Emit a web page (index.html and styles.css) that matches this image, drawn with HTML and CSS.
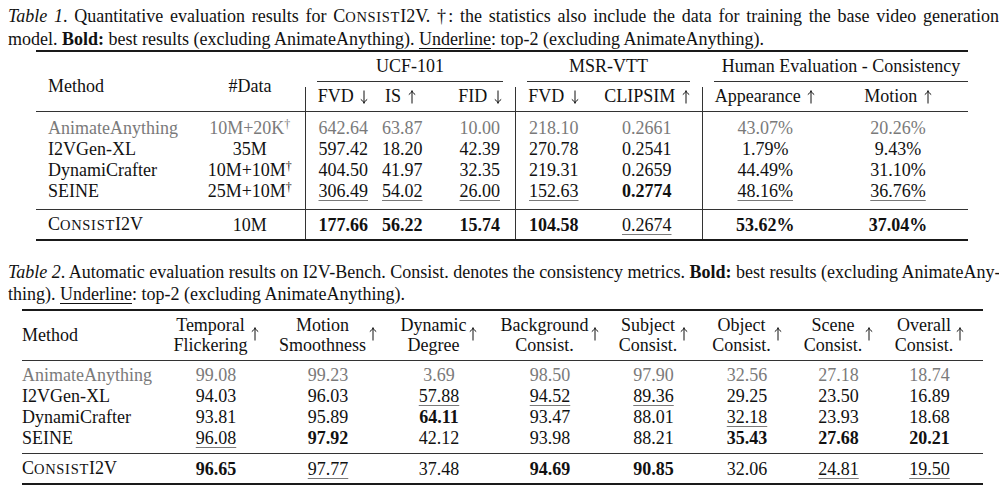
FILE: index.html
```html
<!DOCTYPE html>
<html lang="en">
<head>
<meta charset="utf-8">
<title>Tables</title>
<link rel="stylesheet" href="styles.css">
</head>
<body>
<div class="caption">
  <div class="cap-line full"><i>Table 1</i>. Quantitative evaluation results for <span class="sc">C<span class="sc-s">onsist</span></span>I2V. †: the statistics also include the data for training the base video generation</div>
  <div class="cap-line">model. <b>Bold:</b> best results (excluding AnimateAnything). <span class="ul-plain">Underline</span>: top-2 (excluding AnimateAnything).</div>
</div>

<table class="tbl t1">
  <colgroup>
    <col class="w-method"><col class="w-data"><col class="w-fvd"><col class="w-is"><col class="w-fid"><col class="w-mfvd"><col class="w-clip"><col class="w-app"><col class="w-mot">
  </colgroup>
  <thead>
    <tr>
      <th rowspan="2" class="left multi">Method</th>
      <th rowspan="2" class="multi">#Data</th>
      <th colspan="3" class="grp"><div class="cmid lr">UCF-101</div></th>
      <th colspan="2" class="grp"><div class="cmid lr">MSR-VTT</div></th>
      <th colspan="2" class="grp"><div class="cmid l">Human Evaluation - Consistency</div></th>
    </tr>
    <tr class="sub">
      <th class="vl">FVD <svg class="arw" viewBox="0 0 8 14"><path d="M4 0.5V13M0.8 9.4C2.4 10.4 3.5 11.8 4 13.4C4.5 11.8 5.6 10.4 7.2 9.4"/></svg></th>
      <th class="is">IS <svg class="arw" viewBox="0 0 8 14"><path d="M4 13.5V1M0.8 4.6C2.4 3.6 3.5 2.2 4 0.6C4.5 2.2 5.6 3.6 7.2 4.6"/></svg></th>
      <th class="fid">FID <svg class="arw" viewBox="0 0 8 14"><path d="M4 0.5V13M0.8 9.4C2.4 10.4 3.5 11.8 4 13.4C4.5 11.8 5.6 10.4 7.2 9.4"/></svg></th>
      <th class="vl">FVD <svg class="arw" viewBox="0 0 8 14"><path d="M4 0.5V13M0.8 9.4C2.4 10.4 3.5 11.8 4 13.4C4.5 11.8 5.6 10.4 7.2 9.4"/></svg></th>
      <th>CLIPSIM <svg class="arw" viewBox="0 0 8 14"><path d="M4 13.5V1M0.8 4.6C2.4 3.6 3.5 2.2 4 0.6C4.5 2.2 5.6 3.6 7.2 4.6"/></svg></th>
      <th class="vl">Appearance <svg class="arw" viewBox="0 0 8 14"><path d="M4 13.5V1M0.8 4.6C2.4 3.6 3.5 2.2 4 0.6C4.5 2.2 5.6 3.6 7.2 4.6"/></svg></th>
      <th>Motion <svg class="arw" viewBox="0 0 8 14"><path d="M4 13.5V1M0.8 4.6C2.4 3.6 3.5 2.2 4 0.6C4.5 2.2 5.6 3.6 7.2 4.6"/></svg></th>
    </tr>
  </thead>
  <tbody class="body">
    <tr class="first gray">
      <td class="left">AnimateAnything</td><td>10M+20K<sup class="dag">†</sup></td>
      <td class="vl">642.64</td><td class="is">63.87</td><td class="fid">10.00</td>
      <td class="vl">218.10</td><td>0.2661</td>
      <td class="vl">43.07%</td><td>20.26%</td>
    </tr>
    <tr>
      <td class="left">I2VGen-XL</td><td>35M</td>
      <td class="vl">597.42</td><td class="is">18.20</td><td class="fid">42.39</td>
      <td class="vl">270.78</td><td>0.2541</td>
      <td class="vl">1.79%</td><td>9.43%</td>
    </tr>
    <tr>
      <td class="left">DynamiCrafter</td><td>10M+10M<sup class="dag">†</sup></td>
      <td class="vl">404.50</td><td class="is">41.97</td><td class="fid">32.35</td>
      <td class="vl">219.31</td><td>0.2659</td>
      <td class="vl">44.49%</td><td>31.10%</td>
    </tr>
    <tr class="last">
      <td class="left">SEINE</td><td>25M+10M<sup class="dag">†</sup></td>
      <td class="vl"><span class="ul">306.49</span></td><td class="is"><span class="ul">54.02</span></td><td class="fid"><span class="ul">26.00</span></td>
      <td class="vl"><span class="ul">152.63</span></td><td><b>0.2774</b></td>
      <td class="vl"><span class="ul">48.16%</span></td><td><span class="ul">36.76%</span></td>
    </tr>
  </tbody>
  <tbody class="final">
    <tr>
      <td class="left"><span class="sc">C<span class="sc-s">onsist</span></span>I2V</td><td>10M</td>
      <td class="vl"><b>177.66</b></td><td class="is"><b>56.22</b></td><td class="fid"><b>15.74</b></td>
      <td class="vl"><b>104.58</b></td><td><span class="ul">0.2674</span></td>
      <td class="vl"><b>53.62%</b></td><td><b>37.04%</b></td>
    </tr>
  </tbody>
</table>

<div class="caption cap2">
  <div class="cap-line full"><i>Table 2</i>. Automatic evaluation results on I2V-Bench. Consist. denotes the consistency metrics. <b>Bold:</b> best results (excluding AnimateAny-</div>
  <div class="cap-line">thing). <span class="ul-plain">Underline</span>: top-2 (excluding AnimateAnything).</div>
</div>

<table class="tbl t2">
  <colgroup>
    <col class="v-method"><col class="v-temp"><col class="v-mot"><col class="v-dyn"><col class="v-bg"><col class="v-sub"><col class="v-obj"><col class="v-sce"><col class="v-ovr">
  </colgroup>
  <thead>
    <tr>
      <th class="left">Method</th>
      <th><span class="hd"><span class="hd-t">Temporal<br>Flickering</span><svg class="arw up" viewBox="0 0 8 14"><path d="M4 13.5V1M0.8 4.6C2.4 3.6 3.5 2.2 4 0.6C4.5 2.2 5.6 3.6 7.2 4.6"/></svg></span></th>
      <th><span class="hd"><span class="hd-t">Motion<br>Smoothness</span><svg class="arw up" viewBox="0 0 8 14"><path d="M4 13.5V1M0.8 4.6C2.4 3.6 3.5 2.2 4 0.6C4.5 2.2 5.6 3.6 7.2 4.6"/></svg></span></th>
      <th><span class="hd"><span class="hd-t">Dynamic<br>Degree</span><svg class="arw up" viewBox="0 0 8 14"><path d="M4 13.5V1M0.8 4.6C2.4 3.6 3.5 2.2 4 0.6C4.5 2.2 5.6 3.6 7.2 4.6"/></svg></span></th>
      <th><span class="hd"><span class="hd-t">Background<br>Consist.</span><svg class="arw up" viewBox="0 0 8 14"><path d="M4 13.5V1M0.8 4.6C2.4 3.6 3.5 2.2 4 0.6C4.5 2.2 5.6 3.6 7.2 4.6"/></svg></span></th>
      <th><span class="hd"><span class="hd-t">Subject<br>Consist.</span><svg class="arw up" viewBox="0 0 8 14"><path d="M4 13.5V1M0.8 4.6C2.4 3.6 3.5 2.2 4 0.6C4.5 2.2 5.6 3.6 7.2 4.6"/></svg></span></th>
      <th><span class="hd"><span class="hd-t">Object<br>Consist.</span><svg class="arw up" viewBox="0 0 8 14"><path d="M4 13.5V1M0.8 4.6C2.4 3.6 3.5 2.2 4 0.6C4.5 2.2 5.6 3.6 7.2 4.6"/></svg></span></th>
      <th><span class="hd"><span class="hd-t">Scene<br>Consist.</span><svg class="arw up" viewBox="0 0 8 14"><path d="M4 13.5V1M0.8 4.6C2.4 3.6 3.5 2.2 4 0.6C4.5 2.2 5.6 3.6 7.2 4.6"/></svg></span></th>
      <th class="pr"><span class="hd"><span class="hd-t">Overall<br>Consist.</span><svg class="arw up" viewBox="0 0 8 14"><path d="M4 13.5V1M0.8 4.6C2.4 3.6 3.5 2.2 4 0.6C4.5 2.2 5.6 3.6 7.2 4.6"/></svg></span></th>
    </tr>
  </thead>
  <tbody class="body">
    <tr class="first gray">
      <td class="left">AnimateAnything</td><td>99.08</td><td>99.23</td><td>3.69</td><td>98.50</td><td>97.90</td><td>32.56</td><td>27.18</td><td class="pr">18.74</td>
    </tr>
    <tr>
      <td class="left">I2VGen-XL</td><td>94.03</td><td>96.03</td><td><span class="ul">57.88</span></td><td><span class="ul">94.52</span></td><td><span class="ul">89.36</span></td><td>29.25</td><td>23.50</td><td class="pr">16.89</td>
    </tr>
    <tr>
      <td class="left">DynamiCrafter</td><td>93.81</td><td>95.89</td><td><b>64.11</b></td><td>93.47</td><td>88.01</td><td><span class="ul">32.18</span></td><td>23.93</td><td class="pr">18.68</td>
    </tr>
    <tr class="last">
      <td class="left">SEINE</td><td><span class="ul">96.08</span></td><td><b>97.92</b></td><td>42.12</td><td>93.98</td><td>88.21</td><td><b>35.43</b></td><td><b>27.68</b></td><td class="pr"><b>20.21</b></td>
    </tr>
  </tbody>
  <tbody class="final">
    <tr>
      <td class="left"><span class="sc">C<span class="sc-s">onsist</span></span>I2V</td><td><b>96.65</b></td><td><span class="ul">97.77</span></td><td>37.48</td><td><b>94.69</b></td><td><b>90.85</b></td><td>32.06</td><td><span class="ul">24.81</span></td><td class="pr"><span class="ul">19.50</span></td>
    </tr>
  </tbody>
</table>
</body>
</html>
```

FILE: styles.css
```css
html, body {
  background: #ffffff;
}
body {
  margin: 5px 8px 0 8px;
  font-family: "Liberation Serif", "Times New Roman", serif;
  font-size: 18px;
  color: #111111;
}

.caption {
  line-height: 22px;
}
.cap-line {
  white-space: nowrap;
}
.cap-line.full {
  text-align: justify;
  text-align-last: justify;
}
.cap2 {
  margin-top: 20px;
}
.sc-s {
  text-transform: uppercase;
  font-size: 14.5px;
  letter-spacing: 0.7px;
}
.ul-plain {
  text-decoration: underline;
  text-underline-offset: 3px;
  text-decoration-thickness: 1px;
}
.ul {
  text-decoration: underline;
  text-decoration-color: #7a7a7a;
  text-underline-offset: 3px;
  text-decoration-thickness: 1px;
}

.arw {
  width: 8px;
  height: 14px;
  vertical-align: -2px;
  margin-left: 2px;
  fill: none;
  stroke: currentColor;
  stroke-width: 1;
}

.tbl {
  border-collapse: collapse;
  table-layout: fixed;
  border-top: 2px solid #1a1a1a;
  border-bottom: 2px solid #1a1a1a;
}
.tbl th, .tbl td {
  padding: 0;
  font-weight: normal;
  text-align: center;
  white-space: nowrap;
  line-height: 21px;
}
.tbl .left {
  text-align: left;
}
.tbl b {
  font-weight: bold;
}
.tbl tbody.body {
  border-top: 1px solid #333333;
}
.tbl tbody.body tr.first td {
  padding-top: 6px;
}
.tbl tbody.body tr.last td {
  padding-bottom: 7px;
}
.tbl tbody.final {
  border-top: 1px solid #333333;
}
.tbl tbody.final td {
  padding-top: 4px;
  padding-bottom: 3px;
}
.tbl tr.gray td {
  color: #7a7a7a;
}
.dag {
  font-size: 12px;
  line-height: 0;
  vertical-align: 6px;
}

/* Table 1 */
.t1 {
  width: 932px;
  margin-left: 28px;
}
.w-method { width: 159px; }
.w-data { width: 110px; }
.w-fvd { width: 76px; }
.w-is { width: 52px; }
.w-fid { width: 82px; }
.w-mfvd { width: 77px; }
.w-clip { width: 110px; }
.w-app { width: 126px; }
.w-mot { width: 140px; }

.t1 .left {
  padding-left: 12px;
}
.t1 th.multi {
  vertical-align: middle;
  padding-top: 10px;
}
.t1 th.grp {
  vertical-align: bottom;
}
.cmid {
  padding: 4px 0;
  border-bottom: 1px solid #333333;
}
.cmid.lr {
  margin: 0 12px;
}
.cmid.l {
  margin: 0 0 0 12px;
}
.t1 tr.sub th {
  padding-top: 4px;
  padding-bottom: 4px;
}
.t1 td.vl {
  border-left: 1px solid #333333;
}
.t1 th.vl {
  background: linear-gradient(#333333, #333333) no-repeat left 5px / 1px 100%;
}
.t1 td.is {
  text-align: left;
  padding-left: 1px;
}
.t1 th.is {
  text-align: left;
  padding-left: 4px;
}
.t1 .fid {
  padding-left: 12px;
}

/* Table 2 */
.t2 {
  width: 961px;
  margin-top: 4px;
  margin-left: 14px;
}
.v-method { width: 138px; }
.v-temp { width: 112px; }
.v-mot { width: 112px; }
.v-dyn { width: 110px; }
.v-bg { width: 112px; }
.v-sub { width: 95px; }
.v-obj { width: 92px; }
.v-sce { width: 91px; }
.v-ovr { width: 99px; }

.t2 thead th {
  padding-top: 4px;
  padding-bottom: 5px;
  vertical-align: middle;
}
.t2 .pr {
  padding-right: 8px;
}
.t2 tbody.body tr.first td {
  padding-top: 4px;
}
.t2 tbody.body tr.last td {
  padding-bottom: 4px;
}
.hd {
  display: inline-flex;
  align-items: center;
  gap: 1px;
}
.hd-t {
  display: block;
  line-height: 20px;
  text-align: center;
}
.arw.up {
  margin-top: -2px;
}
```
